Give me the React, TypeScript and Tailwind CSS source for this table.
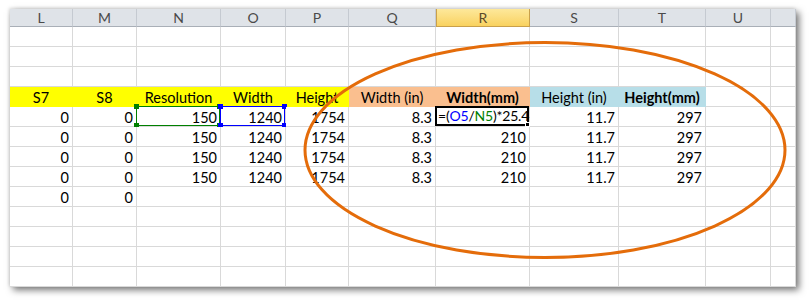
import React from "react";

const cols = ["L", "M", "N", "O", "P", "Q", "R", "S", "T", "U", ""];

type Fill = "yellow" | "peach" | "blue" | "none";

const fillClass: Record<Fill, string> = {
  yellow: "bg-[#ffff00] border-[#ffff00]",
  peach: "bg-[#fabf8f] border-[#fabf8f]",
  blue: "bg-[#b7dee8] border-[#b7dee8]",
  none: "bg-white border-[#d9d9d9]",
};

const headFills: Fill[] = [
  "yellow",
  "yellow",
  "yellow",
  "yellow",
  "yellow",
  "peach",
  "peach",
  "blue",
  "blue",
  "none",
  "none",
];
const headings = [
  "S7",
  "S8",
  "Resolution",
  "Width",
  "Height",
  "Width (in)",
  "Width(mm)",
  "Height (in)",
  "Height(mm)",
  "",
  "",
];

const dataRows = [
  ["0", "0", "150", "1240", "1754", "8.3", "FORMULA", "11.7", "297", "", ""],
  ["0", "0", "150", "1240", "1754", "8.3", "210", "11.7", "297", "", ""],
  ["0", "0", "150", "1240", "1754", "8.3", "210", "11.7", "297", "", ""],
  ["0", "0", "150", "1240", "1754", "8.3", "210", "11.7", "297", "", ""],
  ["0", "0", "", "", "", "", "", "", "", "", ""],
];

const Handle = ({ pos, color }: { pos: string; color: string }) => (
  <span className={`absolute w-[5px] h-[5px] ${pos} ${color}`} />
);

const Cell = ({
  text,
  row,
  col,
}: {
  text: string;
  row: number;
  col: number;
}) => {
  const ranged = row === 0 && (col === 2 || col === 3);
  return (
    <div className="relative h-5 border-r border-b border-[#d9d9d9] bg-white flex items-end justify-end pr-[3px] pb-[1px] leading-none">
      {text === "FORMULA" ? null : text}
      {text === "FORMULA" && (
        <div className="absolute -left-px -top-px w-[calc(100%+1px)] h-[calc(100%+1px)] border-2 border-black flex items-end pl-[1px] pb-[1px] bg-white whitespace-nowrap text-[14px] tracking-[-0.2px]">
          <span>=(</span>
          <span className="text-[#0000ff]">O5</span>
          <span>/</span>
          <span className="text-[#008000]">N5</span>
          <span>)*25.4</span>
          <span className="absolute -right-[3px] -bottom-[3px] w-[5px] h-[5px] bg-black border border-white" />
        </div>
      )}
      {ranged && (
        <div
          className={`absolute -left-px -top-px w-[calc(100%+1px)] h-[calc(100%+1px)] border-[1.5px] ${
            col === 2 ? "border-[#008000]" : "border-[#0000ff]"
          }`}
        >
          {["-left-[3px] -top-[3px]", "-right-[3px] -top-[3px]", "-left-[3px] -bottom-[3px]", "-right-[3px] -bottom-[3px]"].map(
            (p) => (
              <Handle
                key={p}
                pos={p}
                color={col === 2 ? "bg-[#008000]" : "bg-[#0000ff]"}
              />
            )
          )}
        </div>
      )}
    </div>
  );
};

export default function App() {
  return (
    <div className="w-[811px] h-[303px] bg-white pl-[10px] pt-[9px] relative overflow-hidden font-['Lato','Open_Sans',sans-serif] text-[14.5px] text-black">
      <div className="w-[786px] bg-white shadow-[3px_3px_7px_rgba(0,0,0,0.55),-1px_-1px_3px_rgba(0,0,0,0.12)]">
        <div className="grid grid-cols-[63px_64px_84px_65px_63px_87px_94px_89px_87px_65px_25px]">
          {cols.map((c) =>
            c === "R" ? (
              <div
                key={c}
                className="h-[18px] flex items-center justify-center bg-gradient-to-b from-[#fde89a] to-[#f9d25e] border-r border-l border-b border-[#c9a04a] text-[#5a4a2a] text-[14px]"
              >
                {c}
              </div>
            ) : (
              <div
                key={c || "x"}
                className="h-[18px] flex items-center justify-center bg-[#dfe3e8] border-r border-b border-r-[#c5cad1] border-b-[#a9afb7] text-[#4a4a4a] text-[14px]"
              >
                {c}
              </div>
            )
          )}
          {Array.from({ length: 3 }).map((_, r) =>
            cols.map((c, i) => (
              <div
                key={`e${r}${i}`}
                className="h-5 border-r border-b border-[#d9d9d9]"
              />
            ))
          )}
          {headings.map((h, i) => (
            <div
              key={`h${i}`}
              className={`h-5 border-r border-b flex items-end justify-center pb-[1px] leading-none ${fillClass[headFills[i]]} ${
                i === 6 || i === 8 ? "font-bold" : ""
              }`}
            >
              {h}
            </div>
          ))}
          {dataRows.map((row, r) =>
            row.map((t, i) => <Cell key={`d${r}${i}`} text={t} row={r} col={i} />)
          )}
          {Array.from({ length: 4 }).map((_, r) =>
            cols.map((c, i) => (
              <div
                key={`f${r}${i}`}
                className="h-5 border-r border-b border-[#d9d9d9]"
              />
            ))
          )}
        </div>
      </div>
      <svg
        className="absolute left-0 top-0 pointer-events-none"
        width="811"
        height="303"
      >
        <ellipse
          cx="545"
          cy="150"
          rx="240"
          ry="107.5"
          fill="none"
          stroke="#e46c0a"
          strokeWidth="3"
        />
      </svg>
    </div>
  );
}
